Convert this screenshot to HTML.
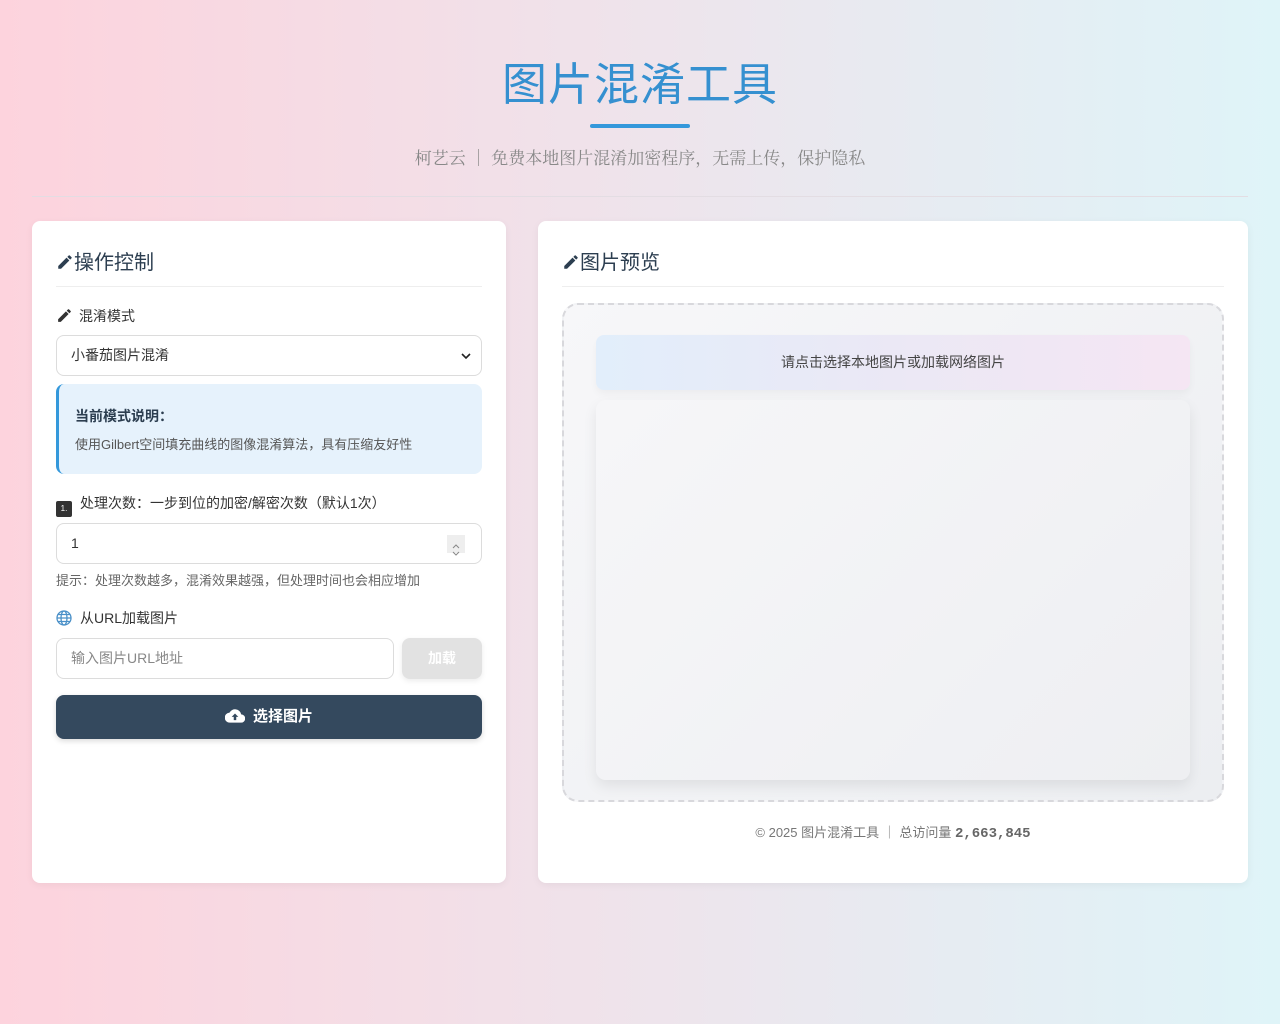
<!DOCTYPE html>
<html><head><meta charset="utf-8"><style>
*{box-sizing:border-box;margin:0;padding:0}
body{width:1280px;height:1024px;background:linear-gradient(90deg,#fdd3dd 0%,#f0e2ea 45%,#e6ecf2 75%,#dff4f8 100%);font-family:"Liberation Sans","Noto Sans CJK SC",sans-serif;color:#333;position:relative;overflow:hidden}
.a{position:absolute}
h1{position:absolute;top:61px;width:100%;text-align:center;font-size:45px;line-height:48px;font-weight:normal;color:#3590d0;font-family:"Liberation Sans","Noto Sans CJK SC",sans-serif;letter-spacing:1px}
.ul{left:590px;top:124px;width:100px;height:4px;background:#3498db;border-radius:2px}
.sub{top:148px;width:100%;text-align:center;font-size:17px;line-height:22px;color:#888;font-family:"Liberation Serif","Noto Serif CJK SC",serif}
.hr{left:32px;top:196px;width:1216px;height:1px;background:#e3dde3}
.card{background:#fff;border-radius:8px;top:221px;height:662px;box-shadow:0 2px 8px rgba(0,0,0,.05)}
.ct{font-size:20px;line-height:28px;color:#2c3e50;top:249px}
.ln{height:1px;background:#eee;top:286px}
.lab{font-size:14px;color:#333}
.inp{border:1px solid #dcdcdc;border-radius:8px;background:#fff;font-size:14px;padding-left:14px;line-height:39px}
</style></head><body>
<h1>图片混淆工具</h1>
<div class="a ul"></div>
<div class="a sub">柯艺云 ｜ 免费本地图片混淆加密程序，无需上传，保护隐私</div>
<div class="a hr"></div>

<div class="a card" style="left:32px;width:474px"></div>
<div class="a ct" style="left:56px"><svg width="18" height="18" viewBox="0 0 24 24" style="vertical-align:-2px"><path d="M3 17.25V21h3.75L17.8 9.94l-3.75-3.75L3 17.25zM20.7 7.04a1 1 0 000-1.41l-2.34-2.34a1 1 0 00-1.41 0l-1.83 1.83 3.75 3.75 1.83-1.83z" fill="#2c3e50"/></svg>操作控制</div>
<div class="a ln" style="left:56px;width:426px"></div>
<div class="a lab" style="left:56px;top:306px"><svg width="17" height="17" viewBox="0 0 24 24" style="vertical-align:-3px;margin-right:6px"><path d="M3 17.25V21h3.75L17.8 9.94l-3.75-3.75L3 17.25zM20.7 7.04a1 1 0 000-1.41l-2.34-2.34a1 1 0 00-1.41 0l-1.83 1.83 3.75 3.75 1.83-1.83z" fill="#333"/></svg>混淆模式</div>
<div class="a inp" style="left:56px;top:335px;width:426px;height:41px">小番茄图片混淆<svg style="position:absolute;right:10px;top:16px" width="10" height="8" viewBox="0 0 10 8"><path d="M1 2l4 4 4-4" stroke="#222" stroke-width="1.6" fill="none"/></svg></div>
<div class="a" style="left:56px;top:384px;width:426px;height:90px;background:#e6f2fc;border-left:3px solid #3498db;border-radius:8px"></div>
<div class="a" style="left:75px;top:406px;font-size:14px;font-weight:bold;color:#2c3e50">当前模式说明：</div>
<div class="a" style="left:75px;top:434px;font-size:13px;color:#555">使用Gilbert空间填充曲线的图像混淆算法，具有压缩友好性</div>
<div class="a lab" style="left:56px;top:493px"><span style="display:inline-block;width:16px;height:16px;background:#333;border-radius:2px;vertical-align:-3px;margin-right:8px;color:#fff;font-size:8px;text-align:center;line-height:16px">1.</span>处理次数：一步到位的加密/解密次数（默认1次）</div>
<div class="a inp" style="left:56px;top:523px;width:426px;height:41px">1<span style="position:absolute;right:16px;top:11px;width:18px;height:18px;background:#eee"><svg width="18" height="18" viewBox="0 0 18 18"><path d="M6 7l3-3 3 3M6 11l3 3 3-3" stroke="#888" fill="none"/></svg></span></div>
<div class="a" style="left:56px;top:570px;font-size:13px;color:#666">提示：处理次数越多，混淆效果越强，但处理时间也会相应增加</div>
<div class="a lab" style="left:56px;top:608px"><svg width="16" height="16" viewBox="0 0 16 16" style="vertical-align:-3px;margin-right:8px"><g fill="none" stroke="#4a90c8" stroke-width="1.3"><circle cx="8" cy="8" r="7"/><ellipse cx="8" cy="8" rx="3" ry="7"/><path d="M1 8h14M2.5 4.5h11M2.5 11.5h11"/></g></svg>从URL加载图片</div>
<div class="a inp" style="left:56px;top:638px;width:338px;height:41px;color:#888">输入图片URL地址</div>
<div class="a" style="left:402px;top:638px;width:80px;height:41px;background:#e2e2e2;border-radius:8px;color:#fff;font-weight:bold;font-size:14px;text-align:center;line-height:41px;box-shadow:0 2px 6px rgba(0,0,0,.08)">加载</div>
<div class="a" style="left:56px;top:695px;width:426px;height:44px;background:#34495e;border-radius:8px;color:#fff;font-weight:bold;font-size:15px;text-align:center;line-height:44px;box-shadow:0 2px 6px rgba(0,0,0,.15)"><svg width="20" height="16" viewBox="0 0 24 18" style="vertical-align:-3px;margin-right:8px"><path d="M19.4 7A7.5 7.5 0 005.4 5 6 6 0 006 17h13a5 5 0 00.4-10z" fill="#fff"/><path d="M12 6l-4 4h2.5v4h3v-4H16z" fill="#34495e"/></svg>选择图片</div>

<div class="a card" style="left:538px;width:710px"></div>
<div class="a ct" style="left:562px"><svg width="18" height="18" viewBox="0 0 24 24" style="vertical-align:-2px"><path d="M3 17.25V21h3.75L17.8 9.94l-3.75-3.75L3 17.25zM20.7 7.04a1 1 0 000-1.41l-2.34-2.34a1 1 0 00-1.41 0l-1.83 1.83 3.75 3.75 1.83-1.83z" fill="#2c3e50"/></svg>图片预览</div>
<div class="a ln" style="left:562px;width:662px"></div>
<div class="a" style="left:562px;top:303px;width:662px;height:499px;border:2px dashed #d8d8dc;border-radius:16px;background:linear-gradient(135deg,#f7f7f9,#eceef1)"></div>
<div class="a" style="left:596px;top:335px;width:594px;height:55px;border-radius:8px;background:linear-gradient(90deg,#e2eefb,#ebe8f5,#f5e6f3);text-align:center;line-height:55px;font-size:14px;color:#444;box-shadow:0 4px 8px rgba(0,0,0,.04)">请点击选择本地图片或加载网络图片</div>
<div class="a" style="left:596px;top:400px;width:594px;height:380px;border-radius:10px;background:linear-gradient(135deg,#f6f6f8,#eeeff2);box-shadow:0 6px 14px rgba(0,0,0,.08)"></div>
<div class="a" style="left:538px;width:710px;top:822px;text-align:center;font-size:13px;color:#777">© 2025 图片混淆工具 ｜ 总访问量 <b style="font-family:'Liberation Mono',monospace;color:#666;font-size:14px">2,663,845</b></div>
</body></html>
